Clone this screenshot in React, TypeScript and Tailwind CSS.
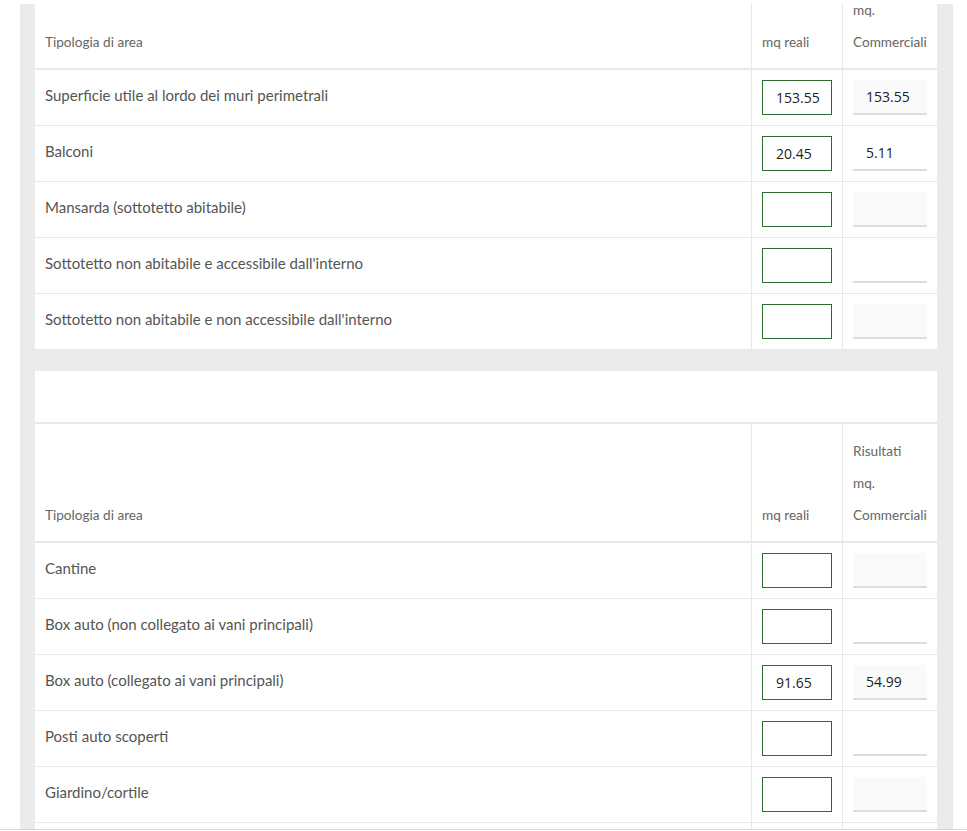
import React from "react";

type Row = { label: string; real?: string; comm?: string };

const tableOne: Row[] = [
  { label: "Superficie utile al lordo dei muri perimetrali", real: "153.55", comm: "153.55" },
  { label: "Balconi", real: "20.45", comm: "5.11" },
  { label: "Mansarda (sottotetto abitabile)" },
  { label: "Sottotetto non abitabile e accessibile dall'interno" },
  { label: "Sottotetto non abitabile e non accessibile dall'interno" },
];

const tableTwo: Row[] = [
  { label: "Cantine" },
  { label: "Box auto (non collegato ai vani principali)" },
  { label: "Box auto (collegato ai vani principali)", real: "91.65", comm: "54.99" },
  { label: "Posti auto scoperti" },
  { label: "Giardino/cortile" },
  { label: "" },
];

const grid = "grid grid-cols-[717px_91px_94px]";

function HeaderRow() {
  return (
    <div className={`${grid} border-b-2 border-[#e8e8e8] text-[13.6px] leading-[32px] text-[#666]`}>
      <div className="flex flex-col justify-end border-r border-[#e8e8e8] pl-[10px] pt-[11px] pb-[10px]">
        <span>Tipologia di area</span>
      </div>
      <div className="flex flex-col justify-end border-r border-[#e8e8e8] pl-[10px] pt-[11px] pb-[10px]">
        <span>mq reali</span>
      </div>
      <div className="flex flex-col justify-end pl-[10px] pt-[11px] pb-[10px]">
        <span>Risultati</span>
        <span>mq.</span>
        <span>Commerciali</span>
      </div>
    </div>
  );
}

function BodyRow({ row, index }: { row: Row; index: number }) {
  const shaded = index % 2 === 0;
  return (
    <div className={`${grid} border-b border-[#e8e8e8]`}>
      <div className="h-[55px] border-r border-[#e8e8e8] pl-[10px] pt-[9px] text-[15px] leading-[32px] text-[#555]">
        {row.label}
      </div>
      <div className="h-[55px] border-r border-[#e8e8e8] pl-[10px] pt-[10px]">
        <div className="flex h-[35px] w-[70px] items-center overflow-hidden border border-[#2e6a2e] bg-white pl-[13px] font-['Open_Sans',sans-serif] text-[14px] text-[#222]">
          {row.real ?? ""}
        </div>
      </div>
      <div className="h-[55px] pl-[10px] pt-[10px]">
        <div
          className={`flex h-[35px] w-[74px] items-center border-b-2 border-[#dddddd] pl-[13px] font-['Open_Sans',sans-serif] text-[14px] text-[#222] ${
            shaded ? "bg-[#fafafa]" : "bg-white"
          }`}
        >
          {row.comm ?? ""}
        </div>
      </div>
    </div>
  );
}

export default function App() {
  return (
    <div className="relative h-[831px] w-[967px] overflow-hidden bg-white font-['Lato',sans-serif]">
      <div className="ml-[20px] mt-[-49px] w-[933px] bg-[#ebebeb] pl-[15px] pr-[16px] pb-[40px]">
        <div className="bg-white">
          <HeaderRow />
          {tableOne.map((r, i) => (
            <BodyRow key={i} row={r} index={i} />
          ))}
        </div>
        <div className="mt-[21px] bg-white">
          <div className="h-[53px] border-b-2 border-[#e8e8e8]" />
          <HeaderRow />
          {tableTwo.map((r, i) => (
            <BodyRow key={i} row={r} index={i} />
          ))}
        </div>
      </div>
      <div className="absolute left-0 right-0 top-0 h-[4px] bg-white" />
      <div className="absolute bottom-0 left-0 right-0 h-[2px] border-t border-[#d6d6d6] bg-white" />
    </div>
  );
}
